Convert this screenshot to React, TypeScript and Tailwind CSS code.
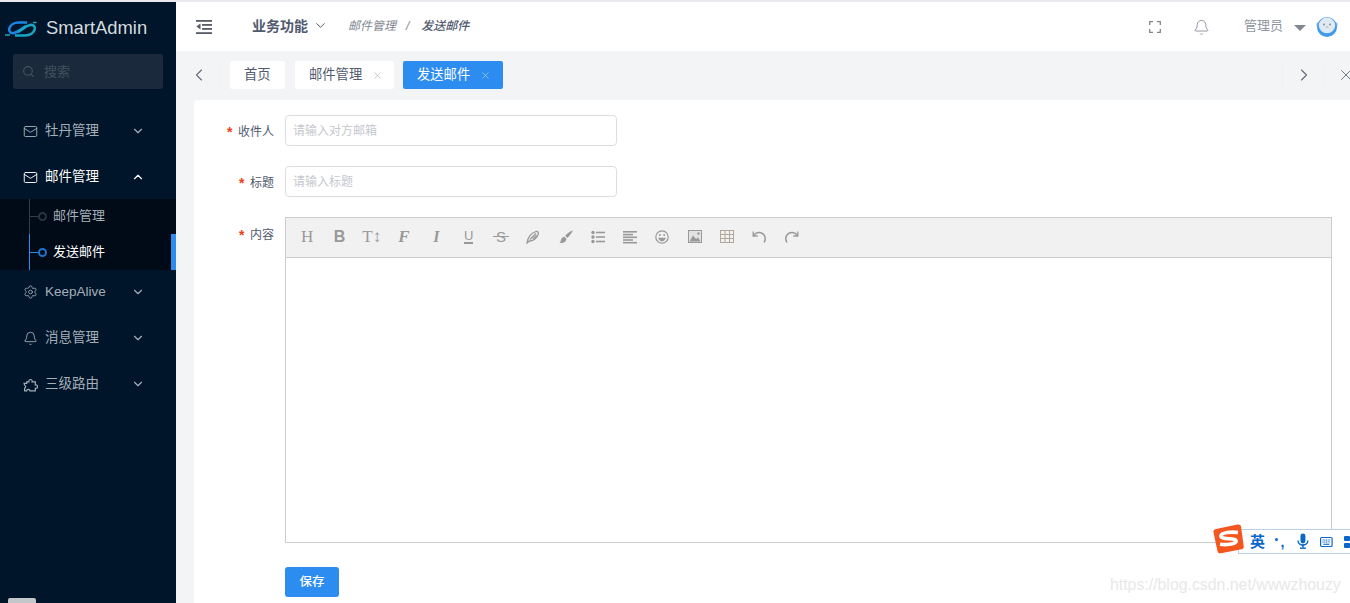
import React from "react";
import { Mail, Settings, Bell, ChevronDown, ChevronUp, ChevronLeft, ChevronRight, X, Search } from "lucide-react";

const FONT = "font-['Liberation_Sans','Noto_Sans_CJK_SC',sans-serif]";

function Logo() {
  return (
    <svg width="32" height="18" viewBox="0 0 32 18" fill="none">
      <path d="M0 15h5" stroke="#22b3c4" strokeWidth="1.400" />
      <path d="M22 2.500H14C9 2.500 5 5 4.200 9 3.700 12 6 13.500 9 13c5-1 8-5 12-7" stroke="#1a86e4" strokeWidth="2.600" />
      <path d="M10 15.500h10c5 0 9-2.500 9.800-6.500C30.300 6 28 4.500 25 5c-5 1-8 5-12 7" stroke="#16a6c6" strokeWidth="2.600" />
      <path d="M28 2.500h3.500" stroke="#22b3c4" strokeWidth="1.400" />
    </svg>
  );
}

function PuzzleIcon() {
  return (
    <svg width="15" height="15" viewBox="0 0 14 14" fill="none" stroke="#a3afb8" strokeWidth="1.100">
      <path d="M1 6h2.500V4.500h2a1.600 1.600 0 1 1 3 0h3v3a1.600 1.600 0 1 1 0 3v2.500h-5a1.500 1.500 0 0 0-3 0H1.500v-2.600a1.400 1.400 0 0 0 0-2.700z" />
    </svg>
  );
}

function NavItem({ icon, label, open, active }: { icon: React.ReactNode; label: string; open?: boolean; active?: boolean }) {
  return (
    <div className={`flex h-[46px] items-center pl-[23px] pr-[31px] ${active ? "text-white" : "text-[#a3afb8]"}`}>
      <span className="flex w-[15px] items-center justify-center">{icon}</span>
      <span className="ml-[7px] flex-1 text-[13.5px] leading-none">{label}</span>
      {open ? <ChevronUp size={14} strokeWidth={2} /> : <ChevronDown size={14} strokeWidth={2} />}
    </div>
  );
}

function SubItem({ label, active }: { label: string; active?: boolean }) {
  const line = active ? "bg-[#2d8cf0]" : "bg-[#333d47]";
  return (
    <div className={`flex items-center pl-[29px] ${active ? "h-[36px] border-r-[5px] border-[#2d8cf0] text-white" : "h-[35px] text-[#a3afb8]"}`}>
      <span className={`h-full w-px ${line}`} />
      <span className={`h-px w-[8px] ${line}`} />
      <span className={`h-[9px] w-[9px] rounded-full border-2 ${active ? "border-[#1f74c9]" : "border-[#2a333c]"}`} />
      <span className={`ml-[6px] text-[13px] leading-none ${active ? "pb-[1px]" : "pb-[2px]"}`}>{label}</span>
    </div>
  );
}

function Sidebar() {
  return (
    <aside className="flex w-[176px] shrink-0 flex-col bg-[#00152a]">
      <div className="flex h-[52px] items-center pl-[5px] pt-[1px]">
        <Logo />
        <span className="ml-[9px] text-[18.4px] leading-none text-[#d5dade]">SmartAdmin</span>
      </div>
      <div className="mx-[13px] flex h-[35px] items-center rounded-[3px] bg-[#1a2a3c] pl-[9px]">
        <Search size={13} className="text-[#46525f]" />
        <span className="ml-[9px] text-[13px] leading-none text-[#44505c]">搜索</span>
      </div>
      <div className="mt-[19px]">
        <NavItem icon={<Mail size={15} strokeWidth={1.5} />} label="牡丹管理" />
        <NavItem icon={<Mail size={15} strokeWidth={1.5} />} label="邮件管理" open active />
        <div className="-mt-[1px] bg-[#010b17]">
          <SubItem label="邮件管理" />
          <SubItem label="发送邮件" active />
        </div>
        <div className="-mt-[1px]">
          <NavItem icon={<Settings size={16} strokeWidth={1.3} />} label="KeepAlive" />
        </div>
        <NavItem icon={<Bell size={15} strokeWidth={1.4} />} label="消息管理" />
        <NavItem icon={<PuzzleIcon />} label="三级路由" />
      </div>
    </aside>
  );
}

function Header() {
  return (
    <header className="flex h-[49px] shrink-0 items-center bg-white pl-[20px]">
      <svg width="16" height="16" viewBox="0 0 16 16" fill="#565b66">
        <rect x="0" y="1" width="16" height="1.800" />
        <rect x="6" y="5" width="10" height="1.800" />
        <rect x="6" y="9" width="10" height="1.800" />
        <rect x="0" y="13.200" width="16" height="1.800" />
        <path d="M4.500 4.600v5.800L0.400 7.500z" />
      </svg>
      <div className="flex items-center pb-[2px]">
        <span className="ml-[40px] text-[14px] font-bold leading-none text-[#515a6e]">业务功能</span>
        <ChevronDown size={15} strokeWidth={1.6} className="ml-[5px] text-[#515a6e]" />
        <span className="ml-[20px] text-[12px] italic leading-none text-[#7f8590]">邮件管理</span>
        <span className="ml-[10px] text-[12px] italic leading-none text-[#7f8590]">/</span>
        <span className="ml-[12px] text-[12px] font-medium italic leading-none text-[#515a6e]">发送邮件</span>
      </div>
      <div className="ml-auto flex items-center pr-[12px]">
        <svg width="12" height="12" viewBox="0 0 12 12" fill="none" stroke="#7f8791" strokeWidth="1.300">
          <path d="M.7 4V.7H4M8 .7h3.300V4M.7 8v3.300H4M11.300 8v3.300H8" />
        </svg>
        <Bell size={17} strokeWidth={1.2} className="ml-[32px] mt-[2px] text-[#7f8791]" />
        <span className="ml-[34px] mb-[2px] text-[13px] leading-none text-[#8f959c]">管理员</span>
        <span className="ml-[11px] mt-[3px] h-0 w-0 border-x-[6px] border-t-[6px] border-x-transparent border-t-[#808892]" />
        <svg className="ml-[10px]" width="22" height="22" viewBox="0 0 22 22">
          <circle cx="3" cy="8.500" r="2.600" fill="#8cc0ec" />
          <circle cx="19" cy="8.500" r="2.600" fill="#8cc0ec" />
          <circle cx="11" cy="11" r="10" fill="#3f9bec" />
          <ellipse cx="11" cy="9.400" rx="8.200" ry="7.800" fill="#dfeaf3" />
          <circle cx="8" cy="8.500" r="0.900" fill="#7c8a98" />
          <circle cx="14" cy="8.500" r="0.900" fill="#7c8a98" />
          <rect x="9.500" y="10.500" width="3" height="1" rx=".5" fill="#a6b3c0" />
        </svg>
      </div>
    </header>
  );
}

function Tab({ label, active, closable, w }: { label: string; active?: boolean; closable?: boolean; w: string }) {
  return (
    <div className={`flex h-[28px] items-center justify-start rounded-[2px] pl-[14px] ${w} ${active ? "bg-[#2d8cf0] text-white" : "bg-white text-[#515a6e]"}`}>
      <span className="text-[13.300px] leading-none">{label}</span>
      {closable && <X size={11} strokeWidth={1.6} className={`ml-[10px] ${active ? "text-[#a8d1f8]" : "text-[#b5b8bd]"}`} />}
    </div>
  );
}

function TabBar() {
  return (
    <div className="flex h-[49px] shrink-0 items-center overflow-hidden bg-[#f3f4f6] pb-[1px]">
      <div className="flex h-[26px] w-[44px] shrink-0 items-center justify-center border-r border-[#eef0f2] pl-[2px] text-[#666c77]">
        <ChevronLeft size={20} strokeWidth={1.3} />
      </div>
      <div className="ml-[10px] flex gap-[10px]">
        <Tab label="首页" w="w-[55px]" />
        <Tab label="邮件管理" closable w="w-[99px]" />
        <div className="-ml-px">
          <Tab label="发送邮件" closable active w="w-[100px]" />
        </div>
      </div>
      <div className="ml-auto flex shrink-0 items-center">
        <div className="flex h-[26px] w-[43px] items-center justify-center border-x border-[#eef0f2] text-[#666c77]">
          <ChevronRight size={20} strokeWidth={1.3} />
        </div>
        <div className="flex w-[25px] items-center pl-[12px] text-[#666c77]">
          <X size={18} strokeWidth={1.2} className="shrink-0" />
        </div>
      </div>
    </div>
  );
}

function Field({ label, placeholder, mt }: { label: string; placeholder: string; mt: string }) {
  return (
    <div className={`flex items-center ${mt}`}>
      <div className="pt-[2px]"><Label text={label} /></div>
      <input
        readOnly
        placeholder={placeholder}
        className="ml-[11px] h-[31px] w-[332px] rounded-[4px] border border-[#dcdee2] bg-white px-[7px] text-[12px] outline-none placeholder:text-[#c5c8ce]"
      />
    </div>
  );
}

function Label({ text }: { text: string }) {
  return (
    <div className="flex w-[80px] shrink-0 items-center justify-end text-[12px] leading-none text-[#515a6e]">
      <span className="mr-[4px] mt-[4px] font-['Liberation_Mono',monospace] text-[14px] font-bold leading-none text-[#ed3f14]">*</span>
      <span>{text}</span>
    </div>
  );
}

const C = "#999";
const tools: React.ReactNode[] = [
  <span className="font-['Liberation_Serif',serif] text-[17px] leading-none text-[#999]">H</span>,
  <span className="text-[16px] font-bold leading-none text-[#999]">B</span>,
  <span className="font-['Liberation_Serif',serif] text-[17px] leading-none text-[#999]">T↕</span>,
  <span className="font-['Liberation_Serif',serif] text-[17px] font-bold italic leading-none text-[#999]">F</span>,
  <span className="font-['Liberation_Serif',serif] text-[16px] font-bold italic leading-none text-[#999]">I</span>,
  <span className="border-b-2 border-[#999] text-[13px] leading-[12px] text-[#999]">U</span>,
  <span className="relative text-[15px] leading-none text-[#999]">
    S
    <span className="absolute left-[-3px] right-[-3px] top-[7px] h-px bg-[#999]" />
  </span>,
  <svg width="14" height="14" viewBox="0 0 14 14" fill="none" stroke={C} strokeWidth="1.300">
    <path d="M1 13C1.500 8 5 3 10 1.500c1.500-.4 2.700.8 2.300 2.300C11 8.500 7 11 3.500 11zM4 9.500 10 3.500M7 9l3.500-3.500" />
  </svg>,
  <svg width="14" height="14" viewBox="0 0 14 14" fill={C}>
    <path d="M13.600.6c.5.5-3.400 6-5.300 7.300L6.200 5.800C7.500 4 13 .1 13.600.6z" />
    <path d="M5.400 6.700 7.400 8.700c0 3-3 4.800-7 4.300 1.700-1 1-2.300 2-4.200.6-1.200 1.800-2 3-2.100z" />
  </svg>,
  <svg width="14" height="14" viewBox="0 0 14 14" fill={C}>
    <circle cx="2" cy="2.500" r="1.700" /><circle cx="2" cy="7" r="1.700" /><circle cx="2" cy="11.500" r="1.700" />
    <rect x="5" y="1.700" width="9" height="1.600" /><rect x="5" y="6.200" width="9" height="1.600" /><rect x="5" y="10.700" width="9" height="1.600" />
  </svg>,
  <svg width="14" height="14" viewBox="0 0 14 14" fill={C}>
    <rect x="0" y="1" width="14" height="1.600" /><rect x="0" y="3.800" width="10" height="1.600" /><rect x="0" y="6.500" width="14" height="1.600" /><rect x="0" y="9.200" width="10" height="1.600" /><rect x="0" y="11.900" width="14" height="1.600" />
  </svg>,
  <svg width="14" height="14" viewBox="0 0 14 14" fill="none" stroke={C} strokeWidth="1.200">
    <circle cx="7" cy="7" r="6.200" />
    <circle cx="4.800" cy="5" r="1" fill={C} stroke="none" /><circle cx="9.200" cy="5" r="1" fill={C} stroke="none" />
    <path d="M3.300 7.800h7.400c-.3 2.200-1.800 3.400-3.700 3.400s-3.400-1.200-3.700-3.400z" fill={C} stroke="none" />
  </svg>,
  <svg width="14" height="13" viewBox="0 0 14 13" fill="none">
    <rect x=".5" y=".5" width="13" height="12" stroke={C} fill="#e2e2e2" />
    <path d="M1.500 11.500 5 5.500l3 3.500 2-1.500 2.500 4z" fill={C} />
    <circle cx="10.500" cy="3.500" r="1.200" fill={C} />
  </svg>,
  <svg width="14" height="13" viewBox="0 0 14 13" fill="none" stroke="#b3a79c" strokeWidth="1">
    <rect x=".5" y=".5" width="13" height="12" /><path d="M.5 4.500h13M.5 8.500h13M5 .5v12M9.500 .5v12" />
  </svg>,
  <svg width="15" height="14" viewBox="0 0 15 14" fill="none" stroke={C} strokeWidth="1.500">
    <path d="M1.500 5.500C4 2 9 1.600 11.700 4.500c2 2.300 1.900 5.200.3 8" />
    <path d="M1.200 1.500v4.500h4.500" strokeWidth="1.300" />
  </svg>,
  <svg width="15" height="14" viewBox="0 0 15 14" fill="none" stroke={C} strokeWidth="1.500">
    <path d="M13.500 5.500C11 2 6 1.600 3.300 4.500c-2 2.300-1.900 5.200-.3 8" />
    <path d="M13.800 1.500v4.500H9.300" strokeWidth="1.300" />
  </svg>,
];

function Editor() {
  return (
    <div className="flex flex-1 flex-col">
      <div className="flex h-[40px] shrink-0 items-center border-b border-[#cccccc] bg-[#f1f1f1] pl-[5px] pb-[2px]">
        {tools.map((t, i) => (
          <span key={i} className="flex h-[24px] w-[32.300px] shrink-0 items-center justify-center">{t}</span>
        ))}
      </div>
      <div className="flex-1 bg-white" />
    </div>
  );
}

function Content() {
  return (
    <main className="ml-[18px] flex-1 rounded-tl-[4px] bg-white pt-[15px]">
      <Field label="收件人" placeholder="请输入对方邮箱" mt="" />
      <Field label="标题" placeholder="请输入标题" mt="mt-[20px]" />
      <div className="mt-[20px] flex items-start">
        <div className="mt-[9px]"><Label text="内容" /></div>
        <div className="ml-[11px] flex h-[326px] w-[1047px] border border-[#cccccc]"><Editor /></div>
      </div>
      <button className="ml-[91px] mt-[24px] h-[30px] w-[54px] rounded-[3px] bg-[#2d8cf0] text-[12.500px] font-medium text-white">保存</button>
    </main>
  );
}

function Sogou() {
  return (
    <div className="absolute left-[1213px] top-[524px] h-[30px] w-[137px]">
      <div className="absolute left-[25px] top-[5px] flex h-[25px] w-[112px] items-center border-y border-l border-[#bcd0e8] bg-white text-[#0a66c8]">
        <span className="ml-[11px] text-[15px] font-bold leading-none">英</span>
        <span className="ml-[10px] mb-[4px] h-[3px] w-[3px] rounded-full bg-[#0a66c8]" />
        <span className="ml-[3px] text-[14px] font-bold leading-none">,</span>
        <svg className="ml-[13px]" width="14" height="17" viewBox="0 0 12 16" fill="#0a66c8">
          <rect x="3.500" y="0" width="5" height="10" rx="2.500" />
          <path d="M1 7c0 6 10 6 10 0" fill="none" stroke="#0a66c8" strokeWidth="1.400" />
          <rect x="5.200" y="11" width="1.600" height="3" /><rect x="3" y="14" width="6" height="1.500" />
        </svg>
        <svg className="ml-[11px]" width="15" height="12" viewBox="0 0 15 12">
          <rect x=".7" y=".7" width="13.600" height="10.600" rx="1.500" fill="none" stroke="#0a66c8" strokeWidth="1.400" />
          <path d="M3 3.700h9M3 5.900h9" stroke="#0a66c8" strokeWidth="1.200" strokeDasharray="1.300 .7" />
          <rect x="4" y="8" width="7" height="1.300" fill="#0a66c8" />
        </svg>
        <svg className="ml-[11px] shrink-0" width="6" height="12" viewBox="0 0 6 12" fill="#0a66c8">
          <rect width="6" height="5" rx="1" /><rect y="7" width="6" height="5" rx="1" />
        </svg>
      </div>
      <svg className="absolute left-0 top-0" width="31" height="30" viewBox="0 0 31 30" fill="none">
        <path d="M3 5 24.500.5c2-.4 3.200.3 3.500 2l2.700 19.500c.2 2-.5 3-2.200 3.300L8 29.300c-2 .3-3-.3-3.500-2L.5 8.500C.1 6.700 1 5.500 3 5z" fill="#f4561f" />
        <path d="M25 8.500C18 7.500 9 8.500 8 11.500c-.7 2.500 4 3 8 3.300 4 .3 8 .8 7 3-1.300 2.700-10 3.200-16 2.500" stroke="#ffffff" strokeWidth="3.600" />
      </svg>
    </div>
  );
}

export default function App() {
  return (
    <div className={`relative flex h-[603px] w-[1350px] flex-col overflow-hidden bg-[#f3f4f6] ${FONT}`}>
      <div className="h-[2px] shrink-0 bg-[#e9e9ed]" />
      <div className="flex min-h-0 flex-1">
        <Sidebar />
        <div className="flex min-w-0 flex-1 flex-col">
          <Header />
          <TabBar />
          <Content />
        </div>
      </div>
      <Sogou />
      <span className="absolute left-[1110px] top-[576px] text-[15.850px] leading-[18px] text-[#e8e8e8]">https://blog.csdn.net/wwwzhouzy</span>
      <div className="absolute left-[8px] top-[598px] h-[5px] w-[28px] rounded-t-[2px] bg-[#c3c7ca]" />
    </div>
  );
}
